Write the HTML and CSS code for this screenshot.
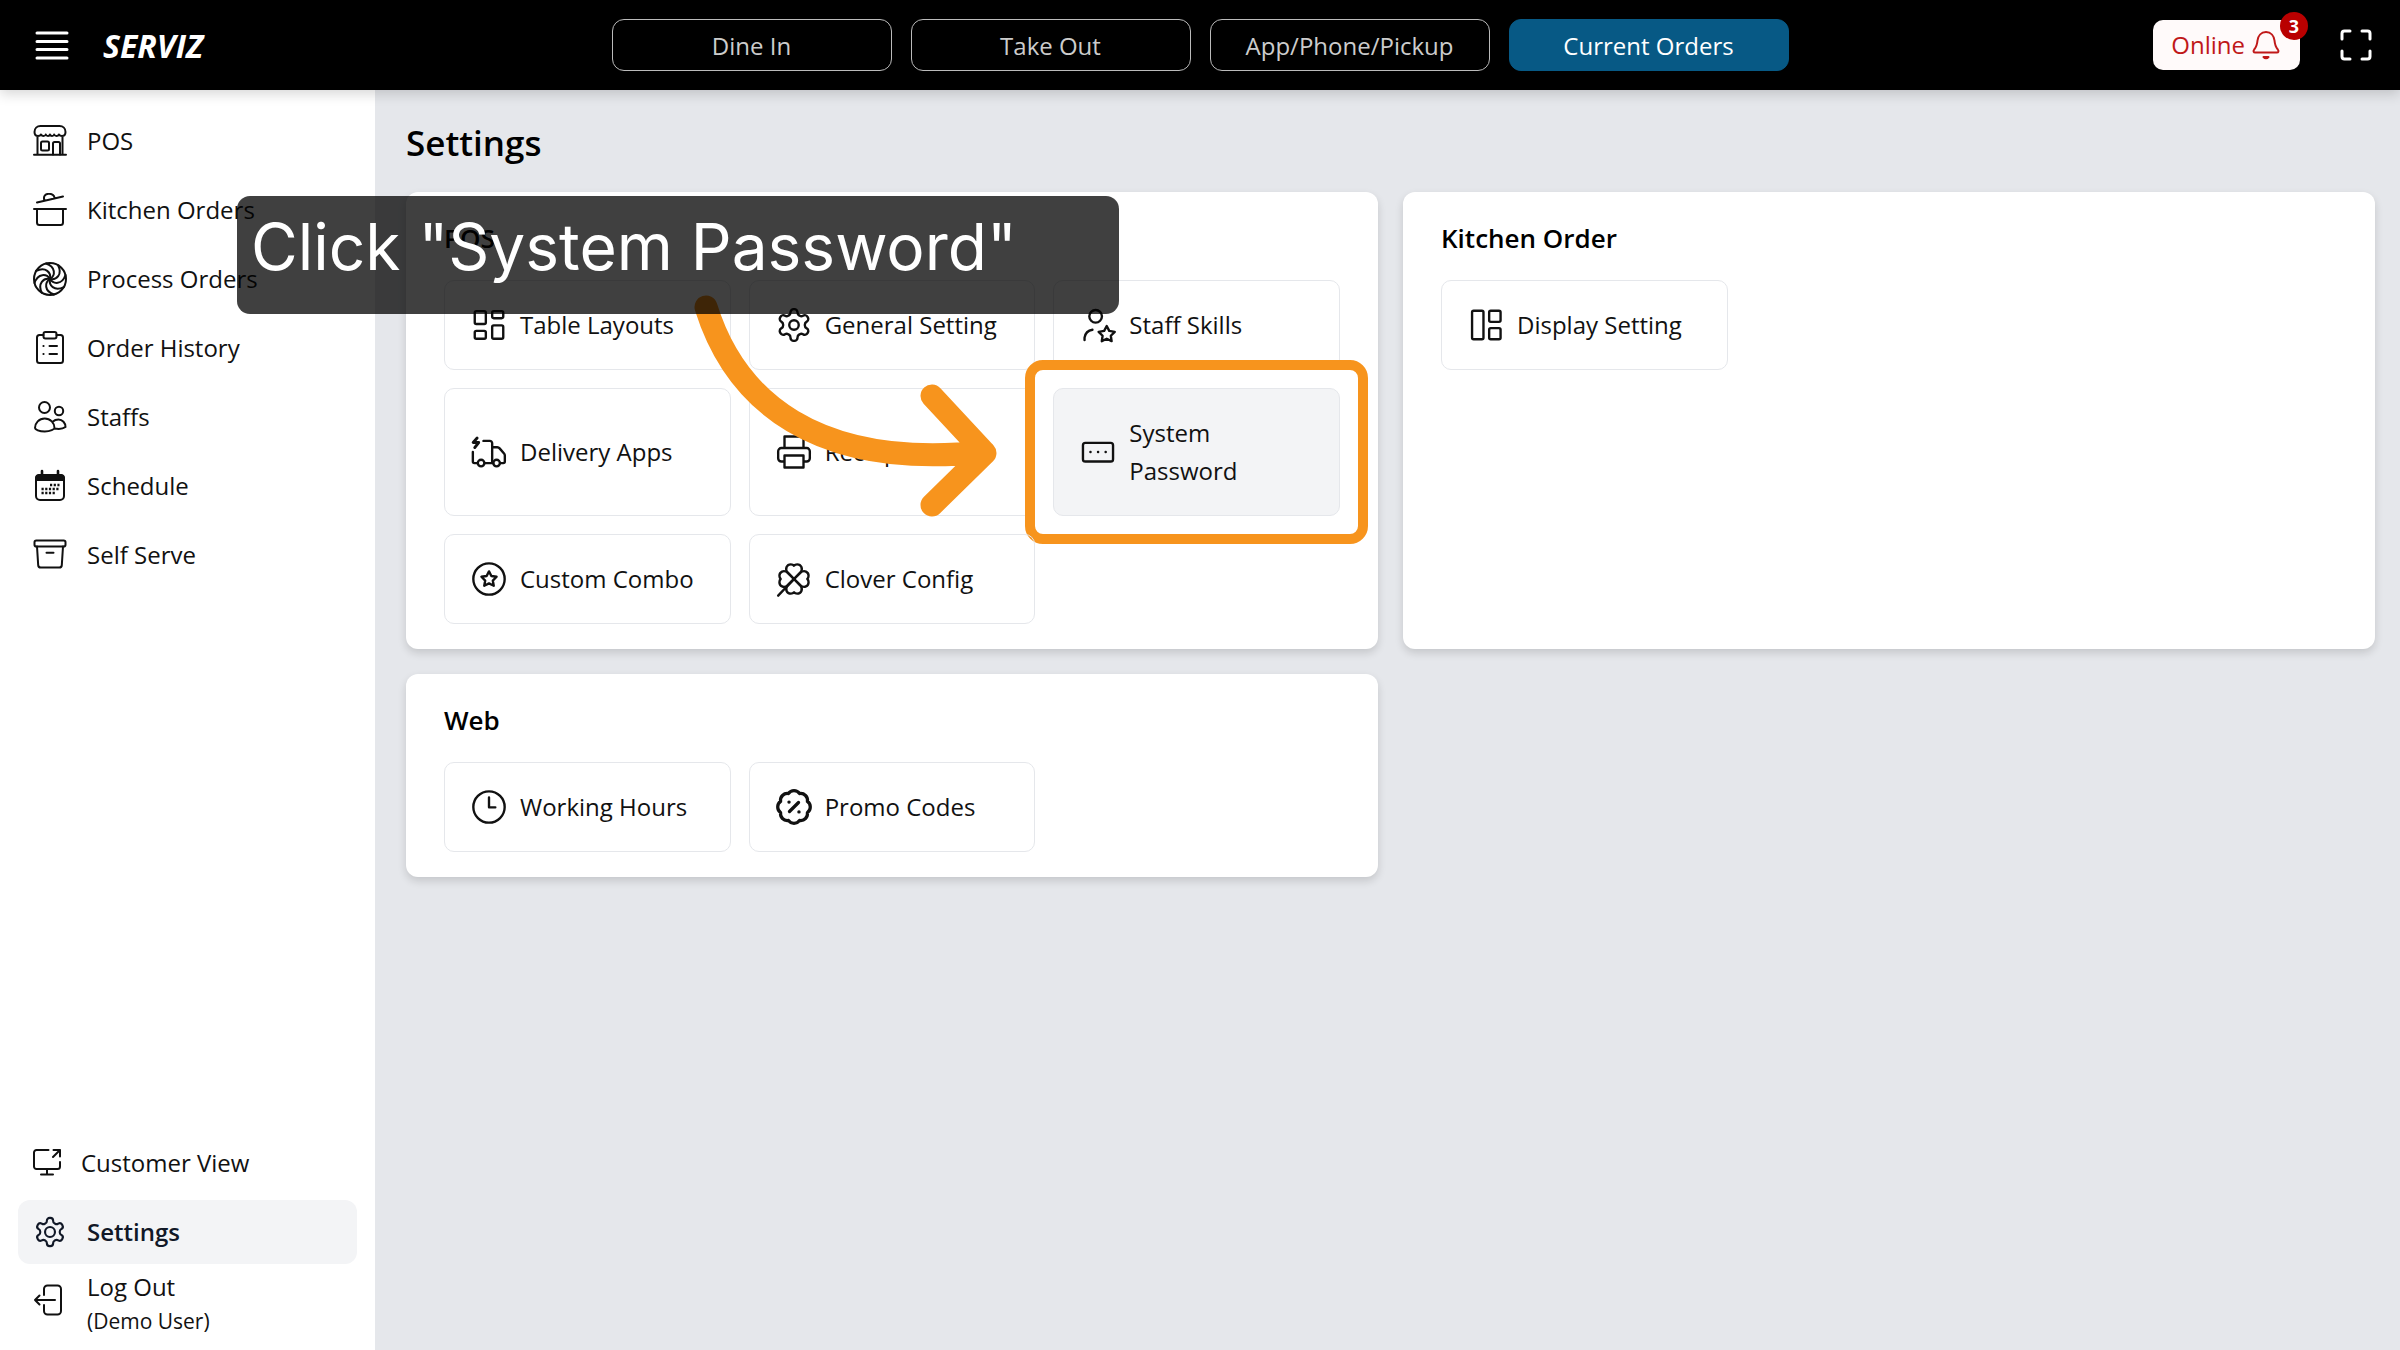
FILE: index.html
```
<!DOCTYPE html>
<html lang="en">
<head>
    <meta charset="UTF-8">
    <meta name="viewport" content="width=device-width, initial-scale=1.0">
    <title>Serviz - Settings</title>
    <link rel="stylesheet" href="styles.css">
</head>
<body>
    <!-- Top Bar -->
    <header class="topbar">
        <div class="brand">
            <button class="icon-button" aria-label="Menu">
                <svg width="34" height="30" viewBox="0 0 34 30" stroke-width="3"><path d="M2 2h30M2 10.500h30M2 18.500h30M2 27h30"/></svg>
            </button>
            <span class="logo">SERVIZ</span>
        </div>

        <nav class="order-tabs">
            <button class="tab">Dine In</button>
            <button class="tab">Take Out</button>
            <button class="tab">App/Phone/Pickup</button>
            <button class="tab active">Current Orders</button>
        </nav>

        <div class="top-actions">
            <button class="online">
                Online
                <svg width="28" height="30" viewBox="0 0 28 30" stroke-width="2.200"><path d="M14 2c-5 0-8 4-8.500 8.500C5 16 4 17.500 2.200 19.500c-1.200 1.500-.7 3 1 3h21.600c1.700 0 2.200-1.500 1-3C24 17.500 23 16 22.500 10.500 22 6 19 2 14 2z"/><path d="M11.500 27c1.500 1.800 3.500 1.800 5 0z"/></svg>
                <span class="badge">3</span>
            </button>
            <button class="icon-button" aria-label="Full screen">
                <svg width="32" height="32" viewBox="0 0 32 32" stroke-width="3"><path d="M2 10V4.500A2.500 2.500 0 0 1 4.500 2H10M22 2h5.500A2.500 2.500 0 0 1 30 4.500V10M30 22v5.500a2.500 2.500 0 0 1-2.500 2.500H22M10 30H4.500A2.500 2.500 0 0 1 2 27.500V22"/></svg>
            </button>
        </div>
    </header>

    <div class="page">
        <!-- Sidebar -->
        <aside class="sidebar">
            <nav class="menu">
                <a href="#" class="menu-item">
                    <svg width="34" height="34" viewBox="0 0 34 34"><path d="M7.500 2h19c3.500 0 6 2.500 6 6 0 2.500-1.500 4-3.500 4-1.500 0-2.500-.5-3-1.500-1 2-4 2-4.800 0-.8 2-3.600 2-4.200 0-.6 2-3.400 2-4.200 0-.8 2-3.800 2-4.800 0-.5 1-1.500 1.500-3 1.500-2 0-3.500-1.500-3.500-4 0-3.500 2.500-6 6-6zM4.500 12v18.500M29.500 12v18.500M1 30.700h32"/><rect x="8" y="17.500" width="8" height="9" rx="1.500"/><path d="M20 30.500V19.500a1.500 1.500 0 0 1 1.500-1.500h4a1.500 1.500 0 0 1 1.500 1.500v11"/></svg>
                    POS
                </a>
                <a href="#" class="menu-item">
                    <svg width="34" height="34" viewBox="0 0 34 34"><path d="M4 9.500l26-6M11.500 7.500C10 3.500 12 1 15.500.8c3.500-.2 6 1.500 6 4.400M1 16h32M4 16v13.500A2.500 2.500 0 0 0 6.500 32h21a2.500 2.500 0 0 0 2.500-2.500V16"/></svg>
                    Kitchen Orders
                </a>
                <a href="#" class="menu-item">
                    <svg width="34" height="34" viewBox="0 0 34 34"><defs><path id="blade" d="M17 17C22.500 13.500 23 5 13 1.500"/></defs><circle cx="17" cy="17" r="16"/><use href="#blade"/><use href="#blade" transform="rotate(45 17 17)"/><use href="#blade" transform="rotate(90 17 17)"/><use href="#blade" transform="rotate(135 17 17)"/><use href="#blade" transform="rotate(180 17 17)"/><use href="#blade" transform="rotate(225 17 17)"/><use href="#blade" transform="rotate(270 17 17)"/><use href="#blade" transform="rotate(315 17 17)"/></svg>
                    Process Orders
                </a>
                <a href="#" class="menu-item">
                    <svg width="34" height="34" viewBox="0 0 34 34"><path d="M10.500 4H6.500A2.500 2.500 0 0 0 4 6.500v23A2.500 2.500 0 0 0 6.500 32h21a2.500 2.500 0 0 0 2.500-2.500v-23A2.500 2.500 0 0 0 27.500 4h-4"/><rect x="10.500" y="1" width="13" height="6.500" rx="2"/><path d="M16.500 15H24M16.500 23H24M10.400 15h.2M10.400 23h.2"/></svg>
                    Order History
                </a>
                <a href="#" class="menu-item">
                    <svg width="34" height="34" viewBox="0 0 34 34"><circle cx="11.500" cy="7.500" r="5.500"/><circle cx="26" cy="11" r="4.200"/><path d="M2 28c0-5 4-9.500 9.700-9.500S21.500 23 21.500 28c0 1-4 3.500-9.700 3.500S2 29.500 2 28zM20 21.500c1.500-1.500 3.500-2 5.500-2 4 0 7 3.500 7 7.500-2 1.500-6.500 2.300-11 1.500"/></svg>
                    Staffs
                </a>
                <a href="#" class="menu-item">
                    <svg width="34" height="34" viewBox="0 0 34 34"><rect x="3" y="6" width="28" height="25" rx="4"/><path d="M3 11V9c0-2 1.500-3 3.500-3h21C29.500 6 31 7 31 9v2z" fill="currentColor"/><path d="M9 2v4M25 2v4" stroke-width="2.600"/><path d="M17 16h9.500M8.500 20h18M8.500 24H23" stroke-width="2.600" stroke-dasharray="2.200 1.500" stroke-linecap="butt"/></svg>
                    Schedule
                </a>
                <a href="#" class="menu-item">
                    <svg width="34" height="34" viewBox="0 0 34 34"><rect x="1.500" y="2.500" width="31" height="6" rx="1.800"/><path d="M4 8.500l1.200 18.600A2.500 2.500 0 0 0 7.700 29.500h18.600a2.500 2.500 0 0 0 2.500-2.400L30 8.500M13.500 14.700h7"/></svg>
                    Self Serve
                </a>
            </nav>

            <nav class="menu">
                <a href="#" class="menu-item">
                    <svg width="28" height="28" viewBox="0 0 28 28"><path d="M15.500 1H3.500A2.500 2.500 0 0 0 1 3.500v14A2.500 2.500 0 0 0 3.500 20h21a2.500 2.500 0 0 0 2.500-2.500V13M20 8l7-7M20.500 1H27v6.500M14 20v5.500M8 25.500h12"/></svg>
                    Customer View
                </a>
                <a href="#" class="menu-item active">
                    <svg width="34" height="34" viewBox="0 0 24 24" class="thin"><path id="gear" d="M12.220 2h-.44a2 2 0 0 0-2 2v.18a2 2 0 0 1-1 1.730l-.43.25a2 2 0 0 1-2 0l-.15-.08a2 2 0 0 0-2.730.73l-.22.38a2 2 0 0 0 .73 2.730l.15.1a2 2 0 0 1 1 1.720v.51a2 2 0 0 1-1 1.740l-.15.09a2 2 0 0 0-.73 2.730l.22.38a2 2 0 0 0 2.730.73l.15-.08a2 2 0 0 1 2 0l.43.25a2 2 0 0 1 1 1.730V20a2 2 0 0 0 2 2h.44a2 2 0 0 0 2-2v-.18a2 2 0 0 1 1-1.730l.43-.25a2 2 0 0 1 2 0l.15.08a2 2 0 0 0 2.730-.73l.22-.39a2 2 0 0 0-.73-2.730l-.15-.08a2 2 0 0 1-1-1.740v-.5a2 2 0 0 1 1-1.740l.15-.09a2 2 0 0 0 .73-2.730l-.22-.38a2 2 0 0 0-2.730-.73l-.15.08a2 2 0 0 1-2 0l-.43-.25a2 2 0 0 1-1-1.730V4a2 2 0 0 0-2-2z"/><circle cx="12" cy="12" r="3.500"/></svg>
                    Settings
                </a>
                <a href="#" class="menu-item logout">
                    <svg width="34" height="34" viewBox="0 0 34 34"><path d="M11 12V6a3.500 3.500 0 0 1 3.500-3.500h10A3.500 3.500 0 0 1 28 6v22a3.500 3.500 0 0 1-3.500 3.500h-10A3.500 3.500 0 0 1 11 28v-6M22 17H2M6.500 12.500L2 17l4.500 4.500"/></svg>
                    <span>Log Out<small>(Demo User)</small></span>
                </a>
            </nav>
        </aside>

        <!-- Settings -->
        <main class="content">
            <h1>Settings</h1>

            <div class="cards">
                <section class="card">
                    <h2>POS</h2>
                    <div class="tiles">
                        <button class="tile">
                            <svg width="38" height="38" viewBox="0 0 24 24"><rect x="3" y="3.200" width="7" height="8.200" rx="1"/><rect x="14" y="3.200" width="7" height="4.500" rx="1"/><rect x="3" y="15.700" width="7" height="5" rx="1"/><rect x="14" y="12.200" width="7" height="8.500" rx="1"/></svg>
                            Table Layouts
                        </button>
                        <button class="tile">
                            <svg width="38" height="38" viewBox="0 0 24 24"><use href="#gear"/><circle cx="12" cy="12" r="3"/></svg>
                            General Setting
                        </button>
                        <button class="tile">
                            <svg width="38" height="38" viewBox="0 0 24 24"><circle cx="10.500" cy="6.500" r="4"/><path d="M3.500 21.500v-1.500a6 6 0 0 1 5-5M17.500 12.600l1.600 3.100 3.500.6-2.500 2.500.5 3.400-3.100-1.500-3.100 1.500.5-3.400-2.500-2.500 3.500-.6z"/></svg>
                            Staff Skills
                        </button>
                        <button class="tile">
                            <svg width="38" height="38" viewBox="0 0 24 24"><path d="M8.500 5h4A1.500 1.500 0 0 1 14 6.500V19M1.800 12v6a1 1 0 0 0 1 1h2M9.200 19h5.500M14 9h3.200a2 2 0 0 1 1.500.7l2.800 3.200a2 2 0 0 1 .5 1.300V18a1 1 0 0 1-1 1h-2"/><circle cx="7" cy="19" r="2.100"/><circle cx="16.800" cy="19" r="2.100"/><path d="M4.500 3.200L2 6h3.500L3 9.200" stroke-width="1.800"/></svg>
                            Delivery Apps
                        </button>
                        <button class="tile">
                            <svg width="38" height="38" viewBox="0 0 24 24"><path d="M6 9V2.200h12V9M6 18H4a2 2 0 0 1-2-2v-4.500a2 2 0 0 1 2-2h16a2 2 0 0 1 2 2V16a2 2 0 0 1-2 2h-2M6 14.200h12v7.600H6z"/></svg>
                            Receipt
                        </button>
                        <button class="tile selected">
                            <svg width="38" height="38" viewBox="0 0 24 24"><rect x="2.500" y="6.200" width="19" height="11.800" rx="1.500"/><path d="M7.200 12h.1M12 12h.1M16.800 12h.1"/></svg>
                            <span>System Password</span>
                        </button>
                        <button class="tile">
                            <svg width="38" height="38" viewBox="0 0 24 24"><circle cx="12" cy="12" r="9.900"/><path d="M12 7.200l1.500 2.900 3.300.5-2.400 2.400.6 3.300-3-1.500-3 1.500.6-3.300-2.400-2.400 3.300-.5z"/></svg>
                            Custom Combo
                        </button>
                        <button class="tile">
                            <svg width="38" height="38" viewBox="0 0 24 24"><defs><path id="leaf" d="M12 12L8 8C6 5.500 7.500 2.800 10 2.800c.9 0 1.500.2 2 .8.5-.6 1.100-.8 2-.8 2.500 0 4 2.700 2 5.200z"/></defs><use href="#leaf"/><use href="#leaf" transform="rotate(90 12 12)"/><use href="#leaf" transform="rotate(180 12 12)"/><use href="#leaf" transform="rotate(270 12 12)"/><path d="M12 12L2 22.500"/></svg>
                            Clover Config
                        </button>
                    </div>
                </section>

                <section class="card">
                    <h2>Kitchen Order</h2>
                    <div class="tiles">
                        <button class="tile">
                            <svg width="38" height="38" viewBox="0 0 24 24"><rect x="3.200" y="3" width="7.200" height="18" rx="1"/><rect x="14" y="3" width="7.200" height="7" rx="1"/><rect x="14" y="14" width="7.200" height="7" rx="1"/></svg>
                            Display Setting
                        </button>
                    </div>
                </section>

                <section class="card">
                    <h2>Web</h2>
                    <div class="tiles">
                        <button class="tile">
                            <svg width="38" height="38" viewBox="0 0 24 24"><circle cx="12" cy="12" r="9.900"/><path d="M12 6v6.200h4"/></svg>
                            Working Hours
                        </button>
                        <button class="tile">
                            <svg width="38" height="38" viewBox="1.500 1.500 21 21"><path stroke-width="1.800" d="M21 12c0 1.268-.63 2.390-1.593 3.068a3.745 3.745 0 0 1-1.043 3.296 3.745 3.745 0 0 1-3.296 1.043A3.745 3.745 0 0 1 12 21c-1.268 0-2.390-.63-3.068-1.593a3.746 3.746 0 0 1-3.296-1.043 3.745 3.745 0 0 1-1.043-3.296A3.745 3.745 0 0 1 3 12c0-1.268.63-2.390 1.593-3.068a3.745 3.745 0 0 1 1.043-3.296 3.746 3.746 0 0 1 3.296-1.043A3.746 3.746 0 0 1 12 3c1.268 0 2.390.63 3.068 1.593a3.746 3.746 0 0 1 3.296 1.043 3.746 3.746 0 0 1 1.043 3.296A3.745 3.745 0 0 1 21 12Z"/><path stroke-width="1.800" d="M9.500 14.500l5-5M9.200 9.300h.1M14.700 14.700h.1"/></svg>
                            Promo Codes
                        </button>
                    </div>
                </section>
            </div>
        </main>
    </div>

    <!-- Walkthrough step -->
    <svg class="step-arrow" width="310" height="240" viewBox="0 0 310 240"><path d="M16 17C45 110 125 180 294 162M242 106l53 57-53 52"/></svg>
    <div class="step-text">Click "System Password"</div>
</body>
</html>
```

FILE: styles.css
```
* {
    box-sizing: border-box;
}
body {
    font-family: "Open Sans", "Noto Sans", sans-serif;
    font-size: 24px;
    line-height: 38px;
    color: #111;
    background-color: #e5e7eb;
    margin: 0;
    min-height: 100vh;
    display: flex;
    flex-direction: column;
    position: relative;
}
button {
    font: inherit;
    color: inherit;
    background: none;
    border: none;
    padding: 0;
    cursor: pointer;
}
svg {
    display: block;
    flex-shrink: 0;
    fill: none;
    stroke: currentColor;
    stroke-width: 2;
    stroke-linecap: round;
    stroke-linejoin: round;
}
h1 {
    font-size: 35px;
    font-weight: 600;
    line-height: 50px;
    color: #000;
    margin: 0 0 24px;
}
h2 {
    font-size: 26px;
    font-weight: 600;
    line-height: 44px;
    color: #000;
    margin: 0 0 20px;
}

/* Top bar */
.topbar {
    display: grid;
    grid-template-columns: 1fr auto 1fr;
    align-items: center;
    height: 90px;
    padding: 0 28px;
    background-color: #000;
    color: #fff;
    box-shadow: 0 4px 12px rgba(0, 0, 0, 0.16);
    position: relative;
    z-index: 1;
}
.icon-button svg {
    stroke-width: 3;
}
.brand {
    display: flex;
    align-items: center;
    gap: 34px;
    padding: 2px 0 0 7px;
}
.logo {
    font-size: 32px;
    font-weight: 700;
    font-style: italic;
}
.order-tabs {
    display: flex;
    gap: 19px;
}
.tab {
    width: 280px;
    height: 52px;
    padding-top: 1px;
    border: 1px solid #bbb;
    border-radius: 12px;
    color: #ccc;
}
.tab.active {
    background-color: #075985;
    border-color: #075985;
    color: #fff;
}
.top-actions {
    display: flex;
    justify-content: flex-end;
    align-items: center;
    gap: 40px;
}
.online {
    display: flex;
    align-items: center;
    gap: 7px;
    height: 50px;
    padding: 0 20px 0 18px;
    border-radius: 10px;
    background-color: #fffafa;
    color: #c01818;
    position: relative;
}
.badge {
    position: absolute;
    top: -8px;
    right: -8px;
    width: 28px;
    height: 28px;
    border-radius: 50%;
    background-color: #b90000;
    color: #fff;
    font-size: 18px;
    font-weight: 700;
    line-height: 28px;
    text-align: center;
}

/* Sidebar */
.page {
    display: flex;
    flex: 1;
}
.sidebar {
    display: flex;
    flex-direction: column;
    justify-content: space-between;
    width: 375px;
    padding: 19px 18px 11px;
    background-color: #fff;
}
.menu {
    display: flex;
    flex-direction: column;
    gap: 5px;
}
.menu-item {
    display: flex;
    align-items: center;
    gap: 20px;
    height: 64px;
    padding: 0 15px;
    border-radius: 12px;
    color: #111;
    text-decoration: none;
}
.menu-item.active {
    background-color: #f3f4f6;
    color: #111827;
    font-weight: 600;
}
.menu-item .thin {
    stroke-width: 1.5;
}
.logout {
    height: auto;
    line-height: 35px;
}
.logout svg {
    margin-bottom: 8px;
}
.logout small {
    display: block;
    font-size: 21px;
}

/* Settings cards */
.content {
    flex: 1;
    padding: 28px 25px 25px 31px;
}
.cards {
    display: grid;
    grid-template-columns: 1fr 1fr;
    gap: 25px;
}
.card {
    background-color: #fff;
    border-radius: 12px;
    padding: 24px 38px 25px;
    box-shadow: 0 4px 8px rgba(0, 0, 0, 0.14);
}
.tiles {
    display: grid;
    grid-template-columns: repeat(3, 1fr);
    gap: 18px;
}
.tile {
    display: flex;
    align-items: center;
    gap: 12px;
    min-height: 90px;
    padding: 25px;
    border: 1px solid #e5e7eb;
    border-radius: 10px;
    text-align: left;
    position: relative;
}
.tile svg {
    stroke-width: 1.5;
}
.tile.selected {
    background-color: #f3f4f6;
}

/* Walkthrough step */
.tile.selected::after {
    content: "";
    position: absolute;
    inset: -29px;
    border: 10px solid #f7941d;
    border-radius: 18px;
}
.step-arrow {
    position: absolute;
    top: 290px;
    left: 690px;
    z-index: 2;
    color: #f7941d;
    stroke-width: 23;
}
.step-text {
    position: absolute;
    top: 196px;
    left: 237px;
    z-index: 3;
    width: 882px;
    height: 118px;
    padding: 0 14px;
    border-radius: 13px;
    background-color: rgba(0, 0, 0, 0.75);
    color: #fff;
    font-family: Inter, sans-serif;
    font-size: 64px;
    line-height: 102px;
    white-space: nowrap;
}
```
